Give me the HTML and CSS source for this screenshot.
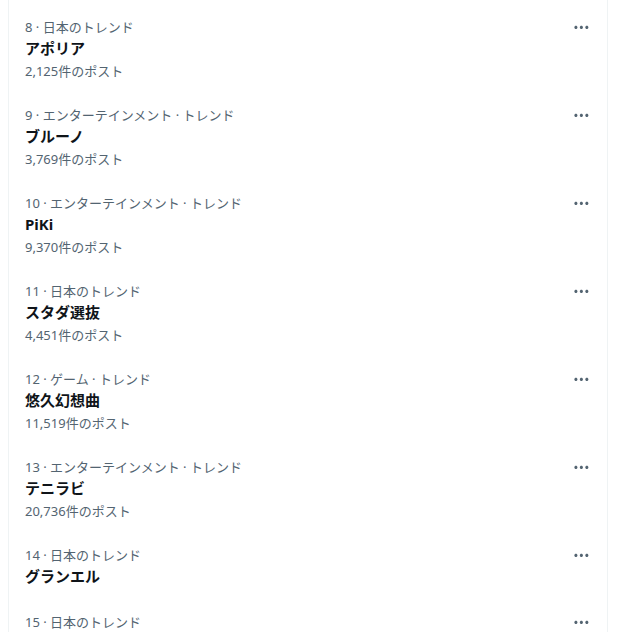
FILE: index.html
```html
<!DOCTYPE html>
<html>
<head lang="ja">
    <meta charset="UTF-8">
    <title>トレンド</title>
    <link rel="stylesheet" href="styles.css">
</head>
<body>
    <div id="trends">
        <div class="trend">
            <div class="trend-body">
                <div class="meta">8 · 日本のトレンド</div>
                <div class="title">アポリア</div>
                <div class="count">2,125件のポスト</div>
            </div>
            <div class="more"><svg viewBox="0 0 24 24"><path d="M3 12c0-1.1.9-2 2-2s2 .9 2 2-.9 2-2 2-2-.9-2-2zm9 2c1.1 0 2-.9 2-2s-.9-2-2-2-2 .9-2 2 .9 2 2 2zm7 0c1.1 0 2-.9 2-2s-.9-2-2-2-2 .9-2 2 .9 2 2 2z"/></svg></div>
        </div>
        <div class="trend">
            <div class="trend-body">
                <div class="meta">9 · エンターテインメント · トレンド</div>
                <div class="title">ブルーノ</div>
                <div class="count">3,769件のポスト</div>
            </div>
            <div class="more"><svg viewBox="0 0 24 24"><path d="M3 12c0-1.1.9-2 2-2s2 .9 2 2-.9 2-2 2-2-.9-2-2zm9 2c1.1 0 2-.9 2-2s-.9-2-2-2-2 .9-2 2 .9 2 2 2zm7 0c1.1 0 2-.9 2-2s-.9-2-2-2-2 .9-2 2 .9 2 2 2z"/></svg></div>
        </div>
        <div class="trend">
            <div class="trend-body">
                <div class="meta">10 · エンターテインメント · トレンド</div>
                <div class="title">PiKi</div>
                <div class="count">9,370件のポスト</div>
            </div>
            <div class="more"><svg viewBox="0 0 24 24"><path d="M3 12c0-1.1.9-2 2-2s2 .9 2 2-.9 2-2 2-2-.9-2-2zm9 2c1.1 0 2-.9 2-2s-.9-2-2-2-2 .9-2 2 .9 2 2 2zm7 0c1.1 0 2-.9 2-2s-.9-2-2-2-2 .9-2 2 .9 2 2 2z"/></svg></div>
        </div>
        <div class="trend">
            <div class="trend-body">
                <div class="meta">11 · 日本のトレンド</div>
                <div class="title">スタダ選抜</div>
                <div class="count">4,451件のポスト</div>
            </div>
            <div class="more"><svg viewBox="0 0 24 24"><path d="M3 12c0-1.1.9-2 2-2s2 .9 2 2-.9 2-2 2-2-.9-2-2zm9 2c1.1 0 2-.9 2-2s-.9-2-2-2-2 .9-2 2 .9 2 2 2zm7 0c1.1 0 2-.9 2-2s-.9-2-2-2-2 .9-2 2 .9 2 2 2z"/></svg></div>
        </div>
        <div class="trend">
            <div class="trend-body">
                <div class="meta">12 · ゲーム · トレンド</div>
                <div class="title">悠久幻想曲</div>
                <div class="count">11,519件のポスト</div>
            </div>
            <div class="more"><svg viewBox="0 0 24 24"><path d="M3 12c0-1.1.9-2 2-2s2 .9 2 2-.9 2-2 2-2-.9-2-2zm9 2c1.1 0 2-.9 2-2s-.9-2-2-2-2 .9-2 2 .9 2 2 2zm7 0c1.1 0 2-.9 2-2s-.9-2-2-2-2 .9-2 2 .9 2 2 2z"/></svg></div>
        </div>
        <div class="trend">
            <div class="trend-body">
                <div class="meta">13 · エンターテインメント · トレンド</div>
                <div class="title">テニラビ</div>
                <div class="count">20,736件のポスト</div>
            </div>
            <div class="more"><svg viewBox="0 0 24 24"><path d="M3 12c0-1.1.9-2 2-2s2 .9 2 2-.9 2-2 2-2-.9-2-2zm9 2c1.1 0 2-.9 2-2s-.9-2-2-2-2 .9-2 2 .9 2 2 2zm7 0c1.1 0 2-.9 2-2s-.9-2-2-2-2 .9-2 2 .9 2 2 2z"/></svg></div>
        </div>
        <div class="trend no-count">
            <div class="trend-body">
                <div class="meta">14 · 日本のトレンド</div>
                <div class="title">グランエル</div>
            </div>
            <div class="more"><svg viewBox="0 0 24 24"><path d="M3 12c0-1.1.9-2 2-2s2 .9 2 2-.9 2-2 2-2-.9-2-2zm9 2c1.1 0 2-.9 2-2s-.9-2-2-2-2 .9-2 2 .9 2 2 2zm7 0c1.1 0 2-.9 2-2s-.9-2-2-2-2 .9-2 2 .9 2 2 2z"/></svg></div>
        </div>
        <div class="trend">
            <div class="trend-body">
                <div class="meta">15 · 日本のトレンド</div>
            </div>
            <div class="more"><svg viewBox="0 0 24 24"><path d="M3 12c0-1.1.9-2 2-2s2 .9 2 2-.9 2-2 2-2-.9-2-2zm9 2c1.1 0 2-.9 2-2s-.9-2-2-2-2 .9-2 2 .9 2 2 2zm7 0c1.1 0 2-.9 2-2s-.9-2-2-2-2 .9-2 2 .9 2 2 2z"/></svg></div>
        </div>
    </div>
</body>
</html>
```

FILE: styles.css
```css
*{
    margin: 0;
    padding: 0;
    box-sizing: border-box;
}
body{
    background: #fff;
    font-family: "Noto Sans", "Noto Sans CJK JP", sans-serif;
    color: #0f1419;
    overflow: hidden;
}
#trends{
    width: 600px;
    margin: 0 0 0 8px;
    padding-top: 5px;
    border-left: 1px solid #eff3f4;
    border-right: 1px solid #eff3f4;
}
.trend{
    display: flex;
    justify-content: space-between;
    padding: 12px 16px;
}
.trend.no-count{
    padding-bottom: 14px;
}
.meta,.count{
    font-size: 13px;
    line-height: 20px;
    color: #536471;
}
.title{
    margin-top: 1px;
    font-size: 15px;
    line-height: 20px;
    font-weight: 700;
}
.count{
    margin-top: 3px;
}
.more{
    margin-top: 1px;
    width: 19px;
    height: 19px;
}
.more svg{
    display: block;
    width: 18.75px;
    height: 18.75px;
    fill: #536471;
}
```
